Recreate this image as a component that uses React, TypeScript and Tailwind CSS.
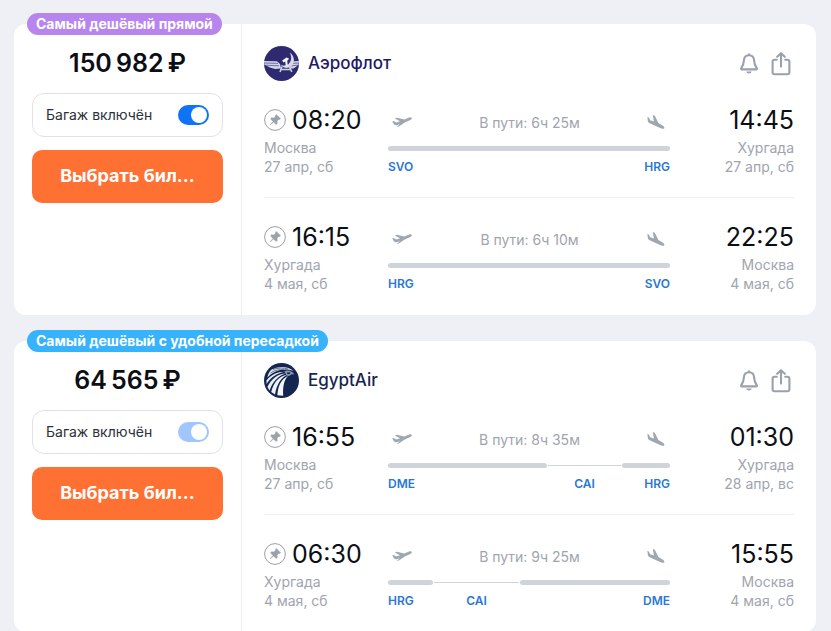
import React from 'react';

interface Stretch {
  share: number;
  layover?: string;
}

interface Leg {
  from: string;
  to: string;
  fromCode: string;
  toCode: string;
  departTime: string;
  arriveTime: string;
  departDate: string;
  arriveDate: string;
  duration: string;
  track: Stretch[];
}

interface Ticket {
  id: string;
  badge: string;
  badgeClass: string;
  price: string;
  airline: string;
  airlineClass: string;
  Logo: React.FC;
  switchClass: string;
  legs: Leg[];
}

const AeroflotLogo: React.FC = () => (
  <svg width="35" height="35" viewBox="0 0 35 35" aria-hidden="true">
    <circle cx="17.5" cy="17.5" r="17.5" fill="#2d2a70" />
    <path d="M0 15 L13 15.2 L16 18 L17 22.6 L11 23 L6 21.6 L2.6 19.8 L0.2 18.4z" fill="#d3d3e6" />
    <path d="M35 15 L29.6 15.2 L27 18 L26 22.6 L29.6 22.4 L32.4 20.6 L34.6 18.6z" fill="#d3d3e6" />
    <path d="M0 17 L14 17.4 M1.6 19.2 L15 19.8 M35 17 L28 17.4 M34 19.2 L27 19.8" stroke="#4b488a" strokeWidth="0.7" />
    <path d="M25.5 6.6 C31.6 10.2 31.6 19.6 24.7 21.6 C21.2 22.6 18.2 21 16.8 18.4 C19.6 20.2 22.8 20 25 17.6 C27.8 14.5 27.8 10 25.5 6.6z" fill="#d9d9ea" />
    <path d="M18.2 14.4 L22.4 11.4 L25 12.6 L24 14.2 L23.2 14.4 L23.8 19.8 L21.8 20 L21.2 15.6 L19.4 16.4z" fill="#f3f3fa" />
    <path d="M18 20.4 L16 26 M25.4 20.4 L27.8 26 M17.2 23.6 H26.4" stroke="#d3d3e6" strokeWidth="1.5" fill="none" />
  </svg>
);

const EgyptAirLogo: React.FC = () => (
  <svg width="35" height="35" viewBox="0 0 35 35" aria-hidden="true">
    <circle cx="17.5" cy="17.5" r="17.5" fill="#14264f" />
    <path d="M7 7 C14 2.6 24 3 29.6 8 C24 6 19 6.2 15.4 7.2 C11.4 8.2 7 10.4 3.4 14.4 C4 11.2 5.2 8.8 7 7z" fill="#e3e8ef" />
    <path d="M2.4 17.6 C7 11.4 13.6 8.6 21.4 8.8 C13.4 10 7 14 2.6 21z" fill="#e3e8ef" />
    <path d="M3.4 24 C7 16 13.4 11 22.4 10.2 C14.6 12.4 9 18 5.6 27.4z" fill="#e8edf3" />
    <path d="M7.2 29 C9.4 20 14.4 13.6 23.4 11.6 C16.6 15.2 12.8 21.6 11 31.4z" fill="#eef1f6" />
    <path d="M13.4 32.2 C14 23.6 16.4 16.8 24 12.8 C19.6 18 18.8 24 19.2 32.8z" fill="#f5f7fa" />
    <path d="M20.6 8.2 C24 6.6 28 7.8 30.4 11.6 C28.4 10.8 26.6 11.4 25.2 13 L22.6 12.4z" fill="#8f9bb3" />
    <path d="M22.8 9.4 L26.8 9.2 L25.4 11.2 L23.2 11z" fill="#14264f" />
    <path d="M9 6.4 C14 4.6 20 4.8 24 6 M6.4 10 C11 7 16 6.2 20 7" fill="none" stroke="#14264f" strokeWidth="0.6" />
  </svg>
);

const BellIcon: React.FC = () => (
  <svg width="20" height="24" viewBox="0 0 20 24" fill="none" stroke="#9aa1ab" strokeWidth="2.1" strokeLinejoin="round" strokeLinecap="round" aria-hidden="true">
    <path d="M10 3.2 C6.9 3.2 5.1 5.3 4.9 8.4 C4.7 12.6 4.2 13.6 2.3 16 C1.8 16.8 2.1 17.4 2.9 17.4 H17.1 C17.9 17.4 18.2 16.8 17.7 16 C15.8 13.6 15.3 12.6 15.1 8.4 C14.9 5.3 13.1 3.2 10 3.2z" />
    <path d="M10 3 V2.2" />
    <path d="M7.2 19.6 H12.8 C12.4 20.9 11.4 21.6 10 21.6 C8.6 21.6 7.6 20.9 7.2 19.6z" fill="#9aa1ab" stroke="none" />
  </svg>
);

const ShareIcon: React.FC = () => (
  <svg width="20" height="24" viewBox="0 0 20 24" fill="none" stroke="#9aa1ab" strokeWidth="2.1" strokeLinejoin="round" strokeLinecap="round" aria-hidden="true">
    <path d="M5.8 7.8 H3.6 C2.4 7.8 1.6 8.6 1.6 9.8 V20.2 C1.6 21.4 2.4 22.2 3.6 22.2 H16.4 C17.6 22.2 18.4 21.4 18.4 20.2 V9.8 C18.4 8.6 17.6 7.8 16.4 7.8 H14.2" />
    <path d="M10 14.6 V1.6 M6.2 4.8 L10 1.2 L13.8 4.8" />
  </svg>
);

const PinIcon: React.FC = () => (
  <svg width="22" height="22" viewBox="0 0 22 22" aria-hidden="true">
    <circle cx="11" cy="11" r="10.4" fill="none" stroke="#9aa1ab" strokeWidth="1" />
    <path d="M12.2 5.4 L16.6 9.8 L15.6 10.5 L14.9 10.2 L13.1 12.2 L13.2 14.6 L12.1 15.4 L9.6 13 L6 16 L9 12.4 L6.6 9.9 L7.4 8.8 L9.8 8.9 L11.8 7.1 L11.5 6.4z" fill="#9aa1ab" stroke="#9aa1ab" strokeWidth="0.5" strokeLinejoin="round" />
  </svg>
);

const TakeoffIcon: React.FC = () => (
  <svg width="20" height="12" viewBox="0 0 20 12" fill="#a0a7b1" aria-hidden="true">
    <path d="M0.2 5.6 L1.6 5.1 L4.4 6.4 L8 5.2 L2.8 2.4 L5 1.7 L12.2 3.6 L16.6 1.7 C18.2 1.1 19.6 1.2 19.8 2 C20 2.8 19.2 3.6 17.8 4.2 L12.8 6.4 L6.8 10.4 L4.6 11 L7.8 8.2 L4.6 9.2 C3.4 9.5 2.6 9.1 2 8.3z" />
  </svg>
);

const LandingIcon: React.FC = () => (
  <svg width="18" height="15" viewBox="0 0 18 15" fill="#a0a7b1" aria-hidden="true">
    <path d="M0.4 1.8 L1.8 2.4 L3.2 5.2 L6.9 6.6 L5.8 0 L7.8 0.8 L11.4 8 L15.6 10.4 C17 11.2 17.8 12.4 17.3 13.2 C16.8 14 15.6 13.9 14.4 13.4 L9.8 11.4 L3.2 8.4 C1.6 7.6 0.9 6.7 0.8 5.4z" />
  </svg>
);

const MOSCOW = 'Москва';
const HURGHADA = 'Хургада';

const tickets: Ticket[] = [
  {
    id: 'aeroflot',
    badge: 'Самый дешёвый прямой',
    badgeClass: 'bg-[#b885ee]',
    price: '150\u2009982\u2009₽',
    airline: 'Аэрофлот',
    airlineClass: 'text-[#231965]',
    Logo: AeroflotLogo,
    switchClass: 'bg-[#0f73f9]',
    legs: [
      { from: MOSCOW, to: HURGHADA, fromCode: 'SVO', toCode: 'HRG', departTime: '08:20', arriveTime: '14:45', departDate: '27 апр, сб', arriveDate: '27 апр, сб', duration: '6ч 25м', track: [{ share: 282 }] },
      { from: HURGHADA, to: MOSCOW, fromCode: 'HRG', toCode: 'SVO', departTime: '16:15', arriveTime: '22:25', departDate: '4 мая, сб', arriveDate: '4 мая, сб', duration: '6ч 10м', track: [{ share: 282 }] },
    ],
  },
  {
    id: 'egyptair',
    badge: 'Самый дешёвый с удобной пересадкой',
    badgeClass: 'bg-[#37b3fc]',
    price: '64\u2009565\u2009₽',
    airline: 'EgyptAir',
    airlineClass: 'text-[#14264f]',
    Logo: EgyptAirLogo,
    switchClass: 'bg-[#9fc7fd]',
    legs: [
      { from: MOSCOW, to: HURGHADA, fromCode: 'DME', toCode: 'HRG', departTime: '16:55', arriveTime: '01:30', departDate: '27 апр, сб', arriveDate: '28 апр, вс', duration: '8ч 35м', track: [{ share: 159 }, { share: 73, layover: 'CAI' }, { share: 48 }] },
      { from: HURGHADA, to: MOSCOW, fromCode: 'HRG', toCode: 'DME', departTime: '06:30', arriveTime: '15:55', departDate: '4 мая, сб', arriveDate: '4 мая, сб', duration: '9ч 25м', track: [{ share: 45 }, { share: 85, layover: 'CAI' }, { share: 150 }] },
    ],
  },
];

const FlightTrack: React.FC<{ leg: Leg }> = ({ leg }) => (
  <div>
    <div className="flex h-8 items-center justify-between pl-1 pr-[5px]">
      <TakeoffIcon />
      <span className="pt-0.5 text-sm text-[#a0a4ae]">В пути: {leg.duration}</span>
      <LandingIcon />
    </div>
    <div className="mt-2">
      <div className="flex h-[5px] items-center gap-px">
        {leg.track.map((part, i) => (
          <div
            key={i}
            className={part.layover ? 'relative h-px bg-[#cfd3da]' : 'h-[5px] rounded-full bg-[#cfd3da]'}
            style={{ flexGrow: part.share, flexBasis: 0 }}
          >
            {part.layover && (
              <span className="absolute left-1/2 top-[11px] -translate-x-1/2 text-xs font-semibold leading-4 text-[#2a78d2]">{part.layover}</span>
            )}
          </div>
        ))}
      </div>
      <div className="mt-2 flex justify-between text-xs font-semibold leading-4 text-[#2a78d2]">
        <span>{leg.fromCode}</span>
        <span>{leg.toCode}</span>
      </div>
    </div>
  </div>
);

const FlightLeg: React.FC<{ leg: Leg }> = ({ leg }) => (
  <div className="grid grid-cols-[124px_1fr_124px]">
    <div>
      <div className="flex items-center gap-[6px] text-[25px] leading-7 text-[#0b0e14]">
        <button type="button" aria-label="Закрепить" className="shrink-0"><PinIcon /></button>
        {leg.departTime}
      </div>
      <div className="mt-1 text-sm leading-[19px] text-[#a0a4ae]">
        <p>{leg.from}</p>
        <p>{leg.departDate}</p>
      </div>
    </div>
    <FlightTrack leg={leg} />
    <div className="text-right">
      <div className="text-[25px] leading-7 text-[#0b0e14]">{leg.arriveTime}</div>
      <div className="mt-1 text-sm leading-[19px] text-[#a0a4ae]">
        <p>{leg.to}</p>
        <p>{leg.arriveDate}</p>
      </div>
    </div>
  </div>
);

const TicketCard: React.FC<{ ticket: Ticket }> = ({ ticket }) => {
  const { Logo } = ticket;
  return (
    <article className="relative flex rounded-xl bg-white">
      <span className={`absolute -top-[11px] left-[13px] rounded-full px-[9px] text-sm font-bold leading-[22px] text-white ${ticket.badgeClass}`}>
        {ticket.badge}
      </span>
      <div className="w-[228px] shrink-0 border-r border-[#eff0f4] px-[18px] pt-[23px]">
        <p className="text-center text-[25px] font-semibold leading-8 text-[#0b0e14]">{ticket.price}</p>
        <label htmlFor={`baggage-${ticket.id}`} className="mt-[14px] flex h-11 items-center justify-between rounded-xl border border-[#e0e2e7] px-[13px] text-sm text-[#2c3038]">
          Багаж включён
          <input
            id={`baggage-${ticket.id}`}
            type="checkbox"
            defaultChecked
            className={`flex h-5 w-[31px] appearance-none items-center justify-end rounded-full px-0.5 before:size-4 before:rounded-full before:bg-white ${ticket.switchClass}`}
          />
        </label>
        <button type="button" className="mt-[13px] h-[53px] w-full rounded-[10px] bg-[#ff7033] pb-0.5 text-lg font-bold text-white">
          Выбрать бил...
        </button>
      </div>
      <div className="min-w-0 flex-1 p-[22px]">
        <header className="flex h-[35px] items-center justify-between">
          <div className={`flex items-center gap-[9px] text-[17px] font-medium ${ticket.airlineClass}`}>
            <Logo />
            {ticket.airline}
          </div>
          <div className="flex gap-3 pr-[3px]">
            <button type="button" aria-label="Следить за ценой"><BellIcon /></button>
            <button type="button" aria-label="Поделиться"><ShareIcon /></button>
          </div>
        </header>
        <div className="mt-[25px]">
          <FlightLeg leg={ticket.legs[0]} />
          <hr className="mb-[25px] mt-[21px] border-[#eff0f4]" />
          <FlightLeg leg={ticket.legs[1]} />
        </div>
      </div>
    </article>
  );
};

export default function App() {
  return (
    <main className="flex min-h-screen flex-col gap-[26px] bg-[#eff0f5] pl-[14px] pr-[15px] pt-6 font-['Inter',sans-serif]">
      {tickets.map((ticket) => (
        <TicketCard key={ticket.id} ticket={ticket} />
      ))}
    </main>
  );
}
